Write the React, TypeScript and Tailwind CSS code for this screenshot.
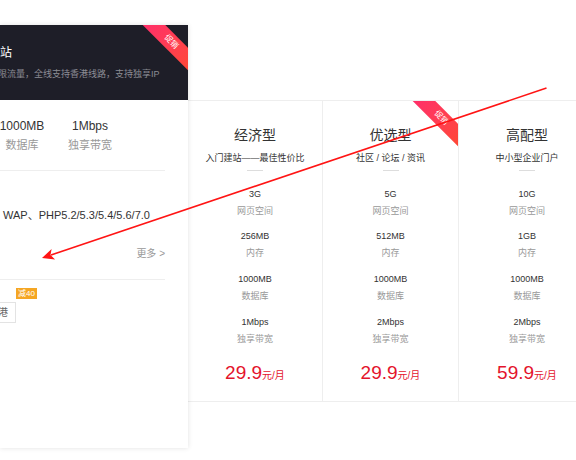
import React from "react";

const FONT = { fontFamily: '"Liberation Sans", "Noto Sans CJK SC", sans-serif' };

type Plan = {
  name: string;
  desc: string;
  space: string;
  mem: string;
  db: string;
  bw: string;
  price: string;
  promo?: boolean;
};

const plans: Plan[] = [
  { name: "经济型", desc: "入门建站——最佳性价比", space: "3G", mem: "256MB", db: "1000MB", bw: "1Mbps", price: "29.9" },
  { name: "优选型", desc: "社区 / 论坛 / 资讯", space: "5G", mem: "512MB", db: "1000MB", bw: "2Mbps", price: "29.9", promo: true },
  { name: "高配型", desc: "中小型企业门户", space: "10G", mem: "1GB", db: "1000MB", bw: "2Mbps", price: "59.9" },
];

function Ribbon() {
  return (
    <div className="absolute right-[-23px] top-[9px] w-[80px] h-[16px] rotate-45 bg-gradient-to-r from-[#ff2a6e] to-[#ff4a2a] flex items-center justify-center">
      <span className="text-[8px] leading-[16px] text-white">促销</span>
    </div>
  );
}

function PlanColumn({ p, widthClass, border }: { p: Plan; widthClass: string; border: boolean }) {
  return (
    <div className={`relative overflow-hidden h-full flex flex-col items-center pt-[24px] ${widthClass} ${border ? "border-r border-[#eeeeee]" : ""}`}>
      {p.promo && <Ribbon />}
      <div className="text-[14px] leading-[20px] text-[#333]">{p.name}</div>
      <div className="mt-[6px] text-[9px] leading-[14px] text-[#333]">{p.desc}</div>
      <div className="mt-[5px] w-[16px] h-[1px] bg-[#dddddd]" />
      <div className="mt-[16px] text-[9px] leading-[14px] text-[#333]">{p.space}</div>
      <div className="mt-[3px] text-[9px] leading-[14px] text-[#999]">网页空间</div>
      <div className="mt-[11px] text-[9px] leading-[14px] text-[#333]">{p.mem}</div>
      <div className="mt-[3px] text-[9px] leading-[14px] text-[#999]">内存</div>
      <div className="mt-[12px] text-[9px] leading-[14px] text-[#333]">{p.db}</div>
      <div className="mt-[3px] text-[9px] leading-[14px] text-[#999]">数据库</div>
      <div className="mt-[12px] text-[9px] leading-[14px] text-[#333]">{p.bw}</div>
      <div className="mt-[3px] text-[9px] leading-[14px] text-[#999]">独享带宽</div>
      <div className="mt-[15px] leading-[24px] text-[#e4142c] flex items-baseline">
        <span className="text-[19px]">{p.price}</span>
        <span className="text-[10px]">元/月</span>
      </div>
    </div>
  );
}

export default function App() {
  return (
    <div className="relative w-[576px] h-[460px] bg-white overflow-hidden" style={FONT}>
      <div className="flex items-start">
        {/* Left card */}
        <div className="relative z-10 mt-[25px] w-[188px] h-[423px] shrink-0 bg-white shadow-[0_0_5px_rgba(0,0,0,0.12)] overflow-hidden">
          <div className="relative h-[75px] bg-[#1e1e28] overflow-hidden pt-[20px]">
            <Ribbon />
            <div className="-ml-[12px] whitespace-nowrap text-[12px] leading-[16px] text-white">建站</div>
            <div className="mt-[7px] -ml-[11px] whitespace-nowrap text-[9px] leading-[12px] text-[#8c8c94]">
              不限流量，全线支持香港线路，支持独享IP
            </div>
          </div>
          <div className="pr-[23px]">
            <div className="mt-[18px] -ml-[12px] flex">
              <div className="w-[68px] text-center">
                <div className="text-[12px] leading-[16px] text-[#333]">1000MB</div>
                <div className="mt-[4px] text-[11px] leading-[14px] text-[#999]">数据库</div>
              </div>
              <div className="w-[68px] text-center">
                <div className="text-[12px] leading-[16px] text-[#333]">1Mbps</div>
                <div className="mt-[4px] text-[11px] leading-[14px] text-[#999]">独享带宽</div>
              </div>
            </div>
            <div className="mt-[18px] h-[1px] bg-[#eeeeee]" />
            <div className="mt-[36px] ml-[3px] whitespace-nowrap text-[11px] leading-[16px] text-[#333]">
              WAP、PHP5.2/5.3/5.4/5.6/7.0
            </div>
            <div className="mt-[24px] text-right text-[10px] leading-[14px] text-[#999]">更多 &gt;</div>
            <div className="mt-[18px] h-[1px] bg-[#eeeeee]" />
            <div className="relative mt-[22px] -ml-[25px] w-[41px] h-[21px] border border-[#e3e3e3] flex items-center justify-end pr-[7px] text-[10px] text-[#666]">
              香港
              <div className="absolute left-full top-[-15px] ml-[1px] w-[21px] h-[11px] bg-[#f5a623] text-white text-[8px] leading-[11px] text-center">
                减40
              </div>
            </div>
          </div>
        </div>

        {/* Plans table */}
        <div className="mt-[100px] flex-1 h-[302px] border-t border-b border-[#eeeeee] flex">
          <PlanColumn p={plans[0]} widthClass="w-[135px]" border />
          <PlanColumn p={plans[1]} widthClass="w-[136px]" border />
          <PlanColumn p={plans[2]} widthClass="w-[136px]" border={false} />
        </div>
      </div>

      {/* Annotation arrow */}
      <svg className="absolute inset-0 pointer-events-none z-20" width="576" height="460" viewBox="0 0 576 460">
        <line x1="546.5" y1="88" x2="51" y2="255" stroke="#ff1414" strokeWidth="1.6" />
        <polygon points="42,258 51.6,249 50.5,255.1 55.1,259.4" fill="#ff1414" />
      </svg>
    </div>
  );
}
